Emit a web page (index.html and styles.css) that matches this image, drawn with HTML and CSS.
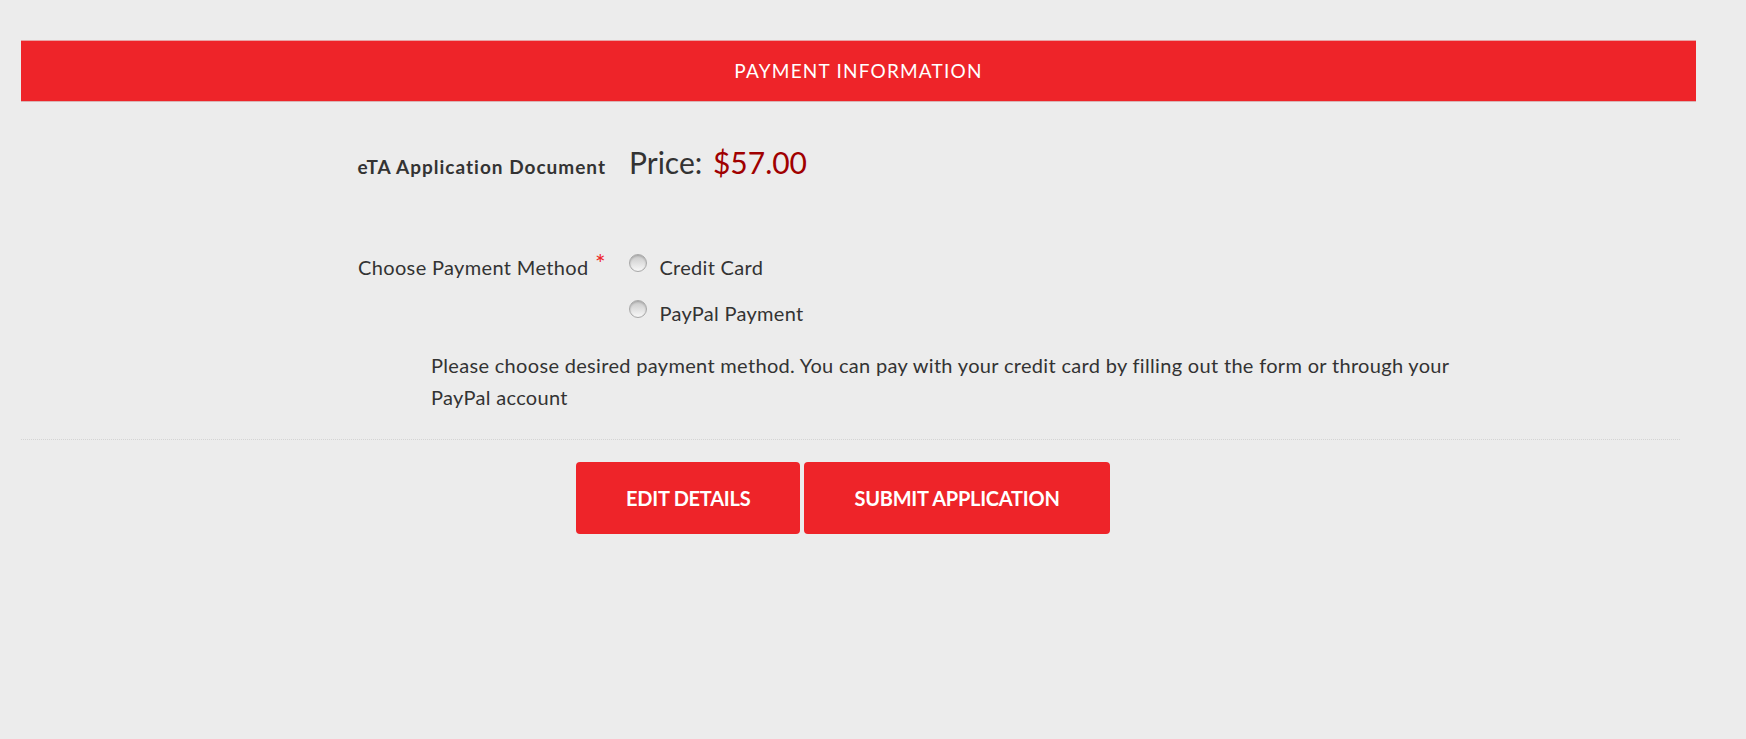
FILE: index.html
```html
<!DOCTYPE html>
<html lang="en">
<head>
    <meta charset="UTF-8">
    <meta name="viewport" content="width=device-width, initial-scale=1.0">
    <title>Payment Information</title>
    <link rel="stylesheet" href="styles.css">
</head>
<body>
    <div class="panel">
        <div class="panel-heading">PAYMENT INFORMATION</div>

        <form class="payment-form" action="/submit" method="post">
            <!-- Document and price -->
            <div class="form-row price-row">
                <div class="form-label doc-label">eTA Application Document</div>
                <div class="price">Price: <span class="amount">$57.00</span></div>
            </div>

            <!-- Payment method -->
            <div class="form-row method-row">
                <label class="form-label method-label">Choose Payment Method <span class="required">*</span></label>
                <div class="options">
                    <label class="option"><input type="radio" name="method" value="card"> Credit Card</label>
                    <label class="option"><input type="radio" name="method" value="paypal"> PayPal Payment</label>
                </div>
            </div>

            <p class="help-text">Please choose desired payment method. You can pay with your credit card by filling out the form or through your PayPal account</p>

            <hr class="divider">

            <div class="actions">
                <button type="button" class="btn">EDIT DETAILS</button>
                <button type="submit" class="btn">SUBMIT APPLICATION</button>
            </div>
        </form>
    </div>
</body>
</html>
```

FILE: styles.css
```css
body {
    font-family: Lato, "Open Sans", Arial, sans-serif;
    background-color: #ececec;
    color: #333;
    margin: 0;
    padding: 0;
}

.panel {
    margin: 40px 50px 0 21px;
}

.panel-heading {
    background-color: #ee2429;
    color: #fff;
    text-align: center;
    font-size: 19px;
    letter-spacing: 1.2px;
    height: 60px;
    line-height: 60px;
    border-top: 1px solid #e8a3a4;
    border-bottom: 1px solid #d9b4b5;
}

.payment-form {
    padding-top: 40px;
}

.form-row {
    display: grid;
    grid-template-columns: 585px 1fr;
    column-gap: 23px;
}

.price-row {
    align-items: baseline;
    line-height: 40px;
}

.form-label {
    text-align: right;
}

.doc-label {
    font-weight: bold;
    font-size: 19px;
    letter-spacing: 1px;
}

.price {
    font-size: 30px;
}

.amount {
    color: #a00000;
    margin-left: 3px;
}

.method-row {
    margin-top: 57px;
    align-items: start;
}

.method-label {
    font-size: 20px;
    line-height: 46px;
    letter-spacing: 0.35px;
}

.required {
    color: #ee2429;
    font-size: 25px;
    line-height: 0;
    position: relative;
    top: -2px;
    margin-left: 1px;
}

.options {
    display: flex;
    flex-direction: column;
}

.option {
    font-size: 20px;
    line-height: 46px;
    letter-spacing: 0.3px;
}

.option input {
    appearance: none;
    -webkit-appearance: none;
    box-sizing: border-box;
    width: 18px;
    height: 18px;
    margin: 0 7px 0 0;
    border: 1px solid #a8a8a8;
    border-radius: 50%;
    background: linear-gradient(#c8c8c8, #f8f8f8);
    box-shadow: inset 0 1px 2px rgba(0, 0, 0, 0.2);
    vertical-align: 3px;
}

.help-text {
    margin: 13px 0 0 410px;
    font-size: 20px;
    line-height: 32px;
    letter-spacing: 0.32px;
    max-width: 1060px;
}

.divider {
    margin: 26px 16px 0 0;
    border: 0;
    border-top: 1px dotted #d4d4d4;
}

.actions {
    padding: 22px 0 0 555px;
}

.btn {
    background-color: #ee2429;
    color: #fff;
    border: 0;
    border-radius: 4px;
    font-family: inherit;
    font-weight: bold;
    font-size: 20px;
    letter-spacing: -0.25px;
    height: 72px;
    padding: 0 50px;
    cursor: pointer;
}
```
